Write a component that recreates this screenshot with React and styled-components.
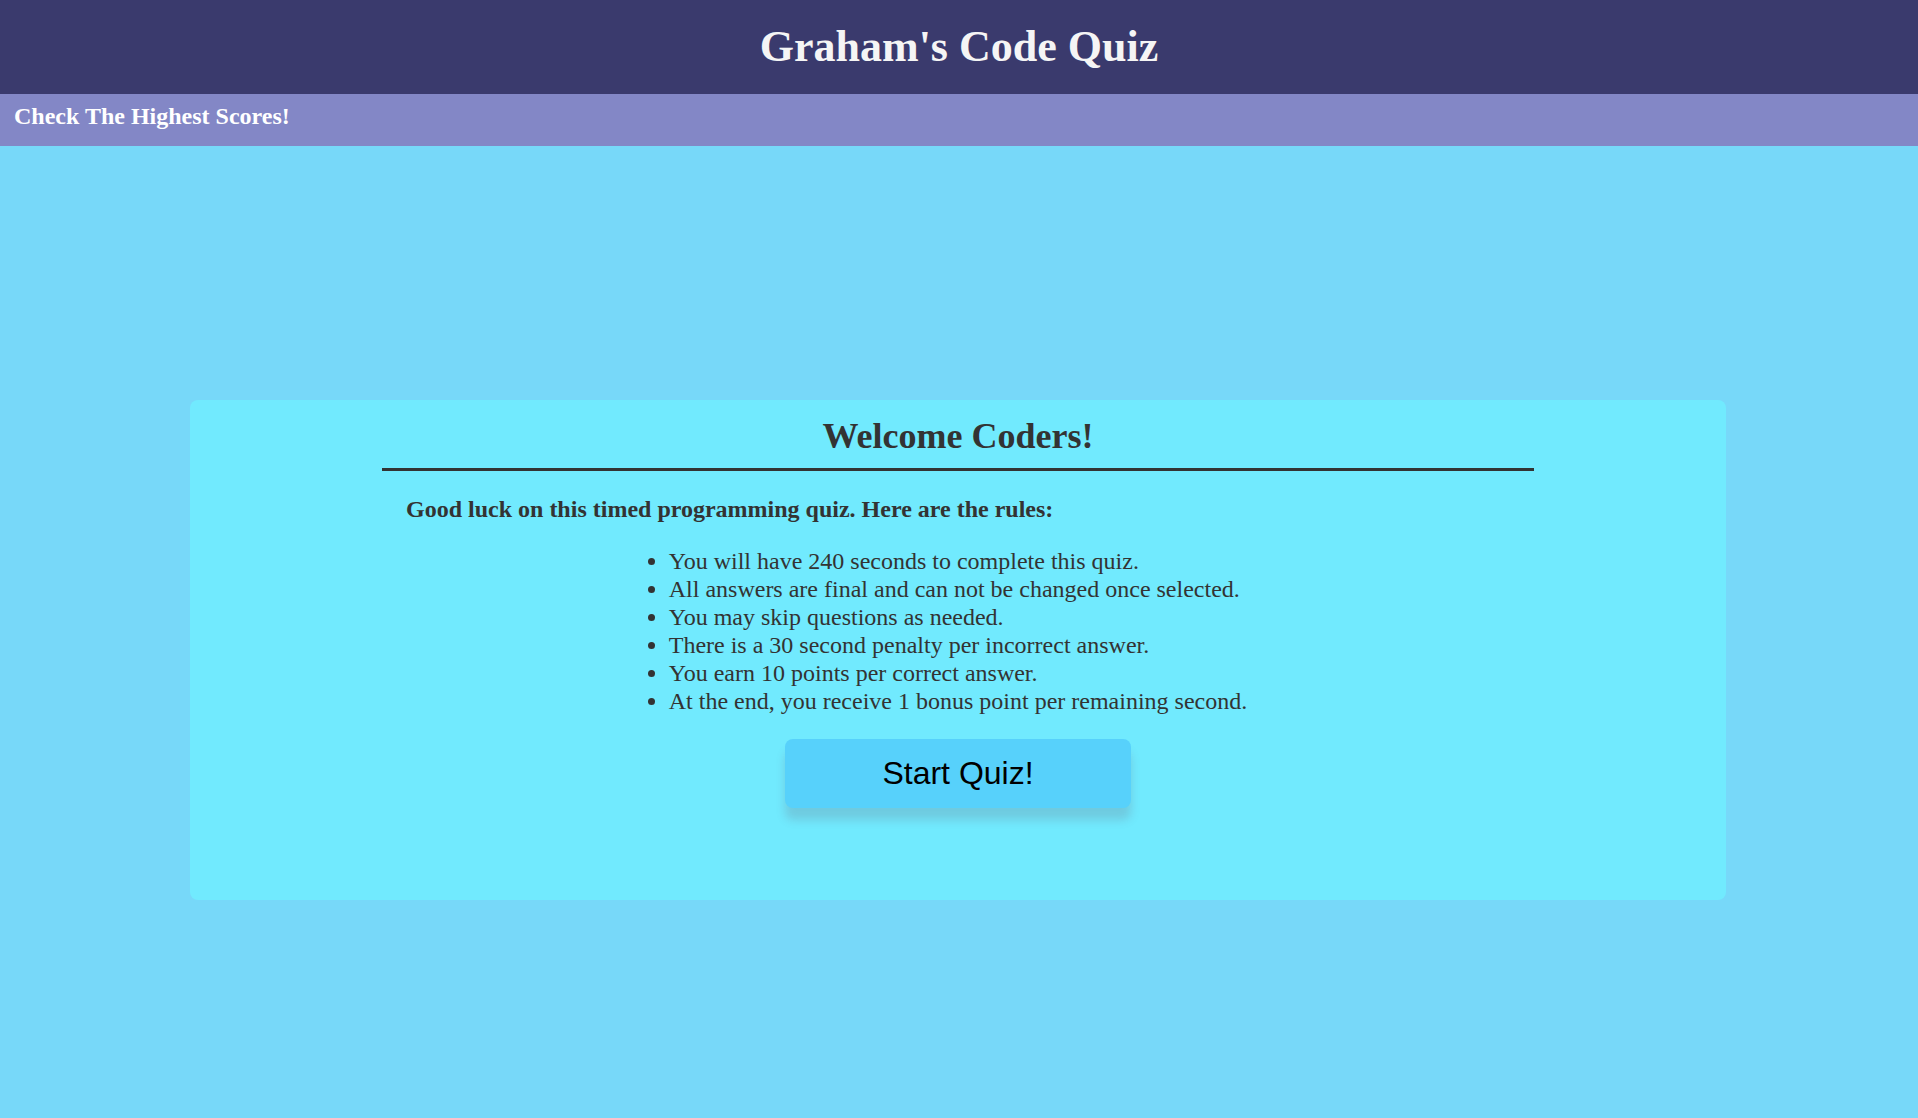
import React from "react";
import styled, { createGlobalStyle } from "styled-components";

const GlobalStyle = createGlobalStyle`
  * {
    box-sizing: border-box;
  }

  body {
    margin: 0;
    background: #77d8f9;
    color: #333;
    font-family: "Liberation Serif", "Times New Roman", serif;
  }
`;

const Page = styled.div`
  display: flex;
  flex-direction: column;
  min-height: 100vh;
`;

const Header = styled.header`
  padding: 20px;
  background: #3a3a6d;
  color: #f5f5f5;
  text-align: center;
`;

const Title = styled.h1`
  margin: 0;
  font-size: 44px;
  line-height: 54px;
`;

const ScoreBar = styled.nav`
  padding: 8px 14px 16px;
  background: #8387c6;
`;

const ScoreLink = styled.a`
  display: inline-block;
  color: #fff;
  font-size: 24px;
  font-weight: bold;
  line-height: 28px;
  text-decoration: none;
  vertical-align: top;
`;

const Main = styled.main`
  display: flex;
  flex: 1;
  align-items: center;
  justify-content: center;
  padding: 36px 2px 0 0;
`;

const Card = styled.section`
  display: flex;
  flex-direction: column;
  align-items: center;
  width: 90%;
  max-width: 1536px;
  min-height: 500px;
  padding-bottom: 24px;
  border-radius: 8px;
  background: #71eafe;
`;

const Intro = styled.div`
  display: flex;
  flex-direction: column;
  align-items: center;
  width: 75%;
`;

const Welcome = styled.h2`
  width: 100%;
  margin: 0;
  padding: 16px 0 12px;
  border-bottom: 3px solid #333;
  font-size: 36px;
  line-height: 40px;
  text-align: center;
`;

const Lead = styled.p`
  width: 100%;
  margin: 0;
  padding: 24px;
  font-size: 24px;
  font-weight: bold;
  line-height: 28px;
`;

const Rules = styled.ul`
  margin: 0 0 24px;
  padding-left: 0;
  font-size: 24px;
  line-height: 28px;
`;

const StartButton = styled.button`
  width: 30%;
  padding: 16px;
  border: 0;
  border-radius: 8px;
  background: #57d1fb;
  box-shadow: 0 12px 10px rgba(106, 82, 106, 0.2);
  color: #000;
  font-family: "Liberation Sans", Arial, sans-serif;
  font-size: 32px;
  line-height: 37px;
  cursor: pointer;
`;

const rules = [
  "You will have 240 seconds to complete this quiz.",
  "All answers are final and can not be changed once selected.",
  "You may skip questions as needed.",
  "There is a 30 second penalty per incorrect answer.",
  "You earn 10 points per correct answer.",
  "At the end, you receive 1 bonus point per remaining second.",
];

export default function App() {
  return (
    <Page>
      <GlobalStyle />
      <Header>
        <Title>Graham's Code Quiz</Title>
      </Header>
      <ScoreBar>
        <ScoreLink href="#scores">Check The Highest Scores!</ScoreLink>
      </ScoreBar>
      <Main>
        <Card>
          <Intro>
            <Welcome>Welcome Coders!</Welcome>
            <Lead>Good luck on this timed programming quiz. Here are the rules:</Lead>
            <Rules>
              {rules.map((rule) => (
                <li key={rule}>{rule}</li>
              ))}
            </Rules>
            <StartButton type="button">Start Quiz!</StartButton>
          </Intro>
        </Card>
      </Main>
    </Page>
  );
}
